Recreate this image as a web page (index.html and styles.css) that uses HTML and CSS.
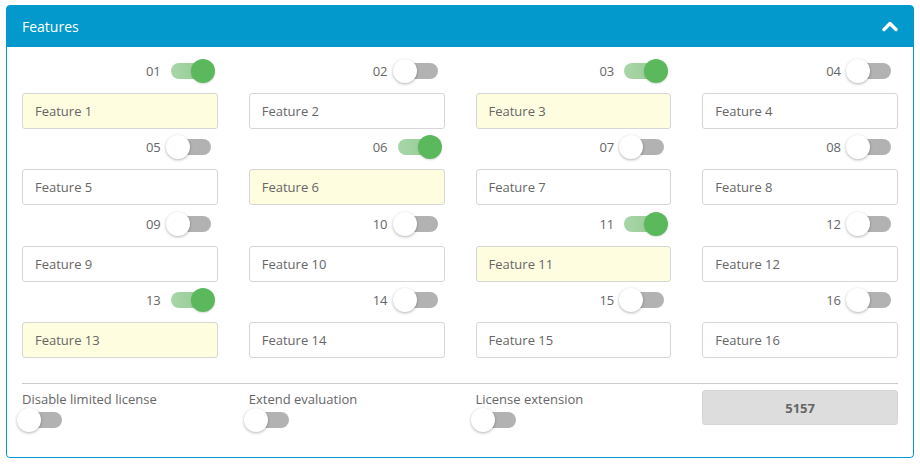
FILE: index.html
```html
<!DOCTYPE html>
<html lang="en">
<head>
    <meta charset="UTF-8">
    <meta name="viewport" content="width=device-width, initial-scale=1.0">
    <title>Features</title>
    <link rel="stylesheet" href="styles.css">
</head>
<body>
    <div class="panel">
        <div class="panel-head">
            <span class="panel-title">Features</span>
            <svg class="chevron" width="16" height="12" viewBox="0 0 16 12">
                <polyline points="2,9.5 8,3.5 14,9.5" fill="none" stroke="#fff" stroke-width="3.4" stroke-linecap="round" stroke-linejoin="round"/>
            </svg>
        </div>
        <div class="panel-body">
            <div class="features">
                <div class="cell">
                    <div class="switch-row"><span class="num">01</span><span class="switch on"><i></i></span></div>
                    <div class="field active">Feature 1</div>
                </div>
                <div class="cell">
                    <div class="switch-row"><span class="num">02</span><span class="switch"><i></i></span></div>
                    <div class="field">Feature 2</div>
                </div>
                <div class="cell">
                    <div class="switch-row"><span class="num">03</span><span class="switch on"><i></i></span></div>
                    <div class="field active">Feature 3</div>
                </div>
                <div class="cell">
                    <div class="switch-row"><span class="num">04</span><span class="switch"><i></i></span></div>
                    <div class="field">Feature 4</div>
                </div>

                <div class="cell">
                    <div class="switch-row"><span class="num">05</span><span class="switch"><i></i></span></div>
                    <div class="field">Feature 5</div>
                </div>
                <div class="cell">
                    <div class="switch-row"><span class="num">06</span><span class="switch on"><i></i></span></div>
                    <div class="field active">Feature 6</div>
                </div>
                <div class="cell">
                    <div class="switch-row"><span class="num">07</span><span class="switch"><i></i></span></div>
                    <div class="field">Feature 7</div>
                </div>
                <div class="cell">
                    <div class="switch-row"><span class="num">08</span><span class="switch"><i></i></span></div>
                    <div class="field">Feature 8</div>
                </div>

                <div class="cell">
                    <div class="switch-row"><span class="num">09</span><span class="switch"><i></i></span></div>
                    <div class="field">Feature 9</div>
                </div>
                <div class="cell">
                    <div class="switch-row"><span class="num">10</span><span class="switch"><i></i></span></div>
                    <div class="field">Feature 10</div>
                </div>
                <div class="cell">
                    <div class="switch-row"><span class="num">11</span><span class="switch on"><i></i></span></div>
                    <div class="field active">Feature 11</div>
                </div>
                <div class="cell">
                    <div class="switch-row"><span class="num">12</span><span class="switch"><i></i></span></div>
                    <div class="field">Feature 12</div>
                </div>

                <div class="cell">
                    <div class="switch-row"><span class="num">13</span><span class="switch on"><i></i></span></div>
                    <div class="field active">Feature 13</div>
                </div>
                <div class="cell">
                    <div class="switch-row"><span class="num">14</span><span class="switch"><i></i></span></div>
                    <div class="field">Feature 14</div>
                </div>
                <div class="cell">
                    <div class="switch-row"><span class="num">15</span><span class="switch"><i></i></span></div>
                    <div class="field">Feature 15</div>
                </div>
                <div class="cell">
                    <div class="switch-row"><span class="num">16</span><span class="switch"><i></i></span></div>
                    <div class="field">Feature 16</div>
                </div>
            </div>

            <div class="footer">
                <div class="opt">
                    <div class="opt-label">Disable limited license</div>
                    <span class="switch"><i></i></span>
                </div>
                <div class="opt">
                    <div class="opt-label">Extend evaluation</div>
                    <span class="switch"><i></i></span>
                </div>
                <div class="opt">
                    <div class="opt-label">License extension</div>
                    <span class="switch"><i></i></span>
                </div>
                <div class="code">5157</div>
            </div>
        </div>
    </div>
</body>
</html>
```

FILE: styles.css
```css
body {
    margin: 5px 6px;
    font-family: "Open Sans", "Liberation Sans", sans-serif;
    font-size: 13px;
    color: #666;
    background: #fff;
}

.panel {
    width: 908px;
    border-radius: 4px;
    overflow: hidden;
}

.panel-head {
    height: 42px;
    background: #0399cc;
    display: flex;
    align-items: center;
    justify-content: space-between;
    padding: 0 16px 0 16px;
    border-radius: 4px 4px 0 0;
}

.panel-title {
    color: #fff;
    font-size: 14px;
}

.chevron {
    display: block;
    margin-top: -1px;
}

.panel-body {
    border: 1px solid #0399cc;
    border-top: none;
    border-radius: 0 0 4px 4px;
    padding: 5px 15px 25px 15px;
}

.features,
.footer {
    display: grid;
    grid-template-columns: repeat(4, 1fr);
    column-gap: 31px;
}

.switch-row {
    height: 40.5px;
    padding-bottom: 3px;
    box-sizing: border-box;
    display: flex;
    align-items: center;
    justify-content: flex-end;
    padding-right: 7px;
}

.num {
    margin-right: 10px;
    line-height: 18px;
}

.switch {
    position: relative;
    display: inline-block;
    width: 40px;
    height: 16px;
    border-radius: 8px;
    background: #b2b2b2;
    margin: 4px 0;
}

.switch i {
    position: absolute;
    top: -4px;
    left: -5px;
    width: 24px;
    height: 24px;
    border-radius: 50%;
    background: #fff;
    box-shadow: 0 1px 3px rgba(0, 0, 0, 0.3);
}

.switch.on {
    background: linear-gradient(90deg, #a9d5a9, #8fcb8f);
}

.switch.on i {
    left: auto;
    right: -4px;
    background: #5cb85c;
    box-shadow: 0 1px 2px rgba(0, 0, 0, 0.15);
}

.field {
    height: 36px;
    box-sizing: border-box;
    border: 1px solid #d6d6d6;
    border-radius: 3px;
    padding: 0 12px;
    line-height: 34px;
    background: #fff;
}

.field.active {
    background: #fefde0;
}

.footer {
    margin-top: 25px;
    border-top: 1px solid #cccccc;
    padding-top: 6px;
}

.opt-label {
    line-height: 18px;
    height: 18px;
}

.opt .switch {
    margin: 4px 0 0 0;
}

.code {
    height: 35px;
    line-height: 35px;
    background: #dddddd;
    border: 1px solid #d6d6d6;
    box-sizing: border-box;
    border-radius: 3px;
    text-align: center;
    font-weight: bold;
    color: #666;
}
```
